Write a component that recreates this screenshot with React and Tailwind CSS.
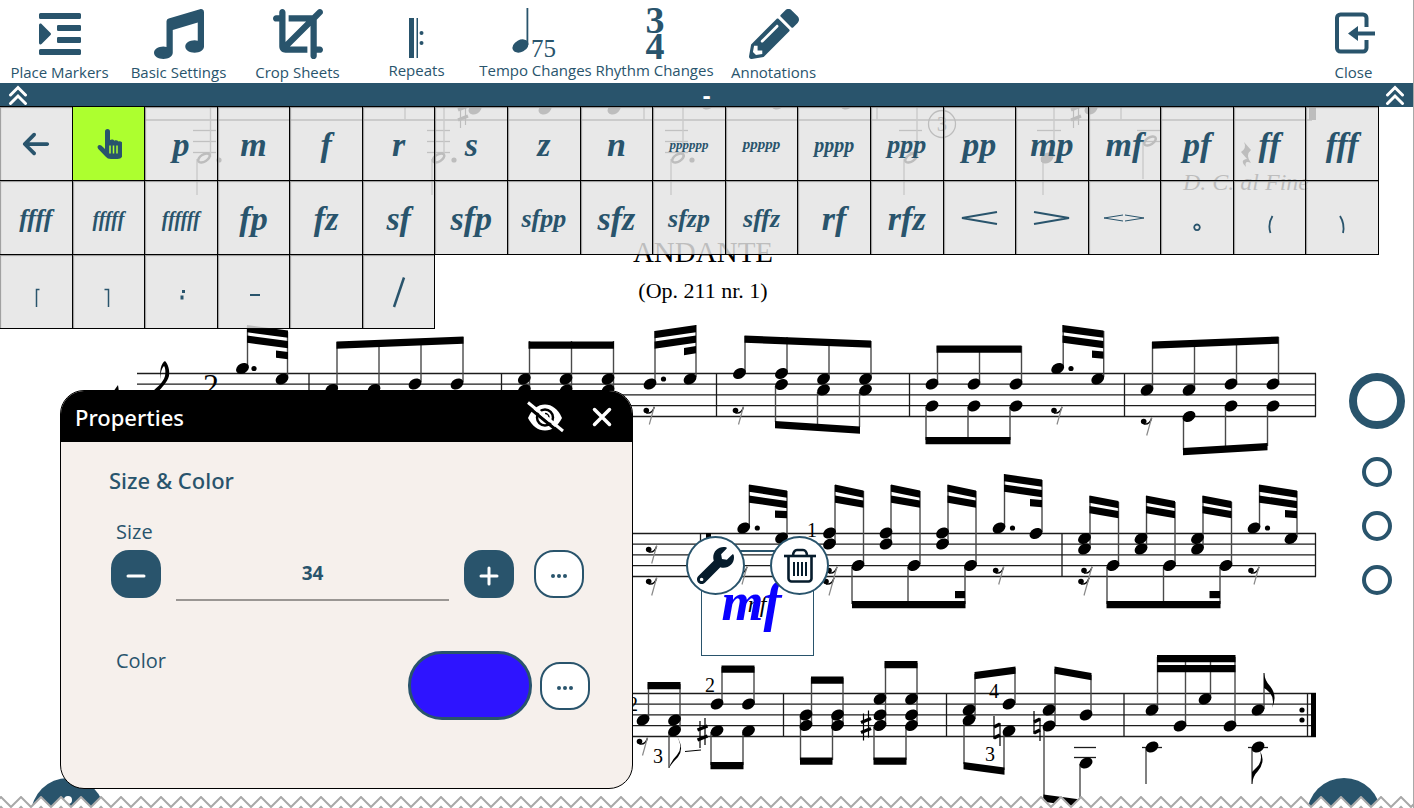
import { FaIndent, FaMusic, FaPencilAlt, FaWrench } from 'react-icons/fa';
import { FaArrowLeft, FaCrop } from 'react-icons/fa6';

/* ---------- Toolbar icons ---------- */

function RepeatIcon() {
  return (
    <svg width="50" height="50" viewBox="0 0 50 50" fill="currentColor" aria-hidden="true">
      <path d="M17 9h5v40h-5zM24.500 9H26v40h-1.500z" />
      <circle cx="29.500" cy="24" r="2" />
      <circle cx="29.500" cy="34" r="2" />
    </svg>
  );
}

function TempoIcon() {
  return (
    <svg width="50" height="50" viewBox="0 0 50 50" fill="currentColor" aria-hidden="true" className="overflow-visible">
      <ellipse cx="9.500" cy="37" rx="8.500" ry="6" transform="rotate(-28 9.500 37)" />
      <path d="M15.500 -1h1.800v37h-1.800z" />
      <text x="20" y="48" fontFamily="Liberation Serif, serif" fontSize="25">75</text>
    </svg>
  );
}

function RhythmIcon() {
  return (
    <svg width="50" height="50" viewBox="0 0 50 50" fill="currentColor" aria-hidden="true" className="overflow-visible">
      <g fontFamily="Liberation Serif, serif" fontWeight="700" fontSize="38" textAnchor="middle">
        <text x="25" y="24">3</text>
        <text x="25" y="50">4</text>
      </g>
    </svg>
  );
}

function ExitIcon() {
  return (
    <svg width="50" height="50" viewBox="0 0 50 50" fill="none" stroke="currentColor" strokeWidth="4" aria-hidden="true">
      <path d="M37.500 18V9A3.500 3.500 0 0 0 34 5.500H11.500A3.500 3.500 0 0 0 8 9v30a3.500 3.500 0 0 0 3.500 3.500H34a3.500 3.500 0 0 0 3.500-3.500v-8" />
      <path d="M27 24.500h19" />
      <path d="M19 24.500 29 17v15z" fill="currentColor" stroke="none" />
    </svg>
  );
}

function DoubleChevron() {
  return (
    <svg width="20" height="20" viewBox="0 0 20 20" fill="none" stroke="white" strokeWidth="3" strokeLinecap="round" aria-hidden="true">
      <path d="M2.500 10 10 2.500 17.500 10M2.500 18.500 10 11l7.500 7.500" />
    </svg>
  );
}

function HandIcon() {
  return (
    <svg width="28" height="30" viewBox="-3 0 28 30" aria-hidden="true">
      <path
        fill="currentColor"
        d="M8 2.500a2.500 2.500 0 0 1 5 0V11c1.500-1 3.500-.6 4.500.7 1.300-.8 3-.4 4 .8 2.500-.6 4.500.8 4.500 3.500V24c0 3.500-2 6-5.500 6H14c-2.500 0-4-.8-5.500-2.500L1.300 20C-.8 17.300 2 14.700 4.300 16.500L8 20z"
      />
      <path d="M13 16.500v8M16.500 16.500v8M20 16.500v8" stroke="#adff2f" strokeWidth="1.500" />
    </svg>
  );
}

function HideIcon() {
  return (
    <svg width="38" height="32" viewBox="0 0 38 32" fill="none" stroke="white" aria-hidden="true">
      <path d="M2 17C6 8 12 3.500 19 3.500S32 8 36 17c-4 8-10 12.500-17 12.500S6 25 2 17z" fill="white" stroke="none" />
      <circle cx="19" cy="16.500" r="8" strokeWidth="2.500" stroke="black" />
      <path d="M19 12.500a4 4 0 0 1 4 4" strokeWidth="1.500" stroke="black" />
      <path d="M1 5 35 33" stroke="black" strokeWidth="3" />
      <path d="M2 1.500 37 30" strokeWidth="3" />
    </svg>
  );
}

function TrashIcon() {
  return (
    <svg width="32" height="36" viewBox="0 0 32 36" fill="none" stroke="currentColor" strokeWidth="2.600" aria-hidden="true">
      <path d="M0 8h32" />
      <path d="M9 8c0-4 2-6 4-6h6c2 0 4 2 4 6" />
      <path d="M4.500 8v22.500a3 3 0 0 0 3 3h17a3 3 0 0 0 3-3V8" />
      <path d="M10 14v14M14 14v14M18 14v14M22 14v14" strokeWidth="2" />
    </svg>
  );
}

/* ---------- Toolbar ---------- */

const TOOLS = [
  { label: 'Place Markers', icon: <FaIndent size={48} /> },
  { label: 'Basic Settings', icon: <FaMusic size={50} /> },
  { label: 'Crop Sheets', icon: <FaCrop size={50} /> },
  { label: 'Repeats', icon: <RepeatIcon />, raised: true },
  { label: 'Tempo Changes', icon: <TempoIcon />, raised: true },
  { label: 'Rhythm Changes', icon: <RhythmIcon />, raised: true },
  { label: 'Annotations', icon: <FaPencilAlt size={50} /> },
];

function ToolButton({ label, icon, raised }) {
  return (
    <button type="button" className="flex w-[119px] shrink-0 flex-col items-center">
      <span className="flex h-[50px] items-center justify-center">{icon}</span>
      <span className={`text-[15px] leading-[22px] whitespace-nowrap ${raised ? '' : 'pt-0.5'}`}>{label}</span>
    </button>
  );
}

function Toolbar() {
  return (
    <header>
      <nav className="flex h-[83px] justify-between bg-white pt-[9px]">
        <div className="flex">
          {TOOLS.map((tool) => (
            <ToolButton key={tool.label} {...tool} />
          ))}
        </div>
        <ToolButton label="Close" icon={<ExitIcon />} />
      </nav>
      <div className="flex h-6 items-center justify-between bg-[#29546c] px-2">
        <button type="button" aria-label="Collapse left">
          <DoubleChevron />
        </button>
        <button type="button" className="text-2xl leading-6 font-bold text-white">-</button>
        <button type="button" aria-label="Collapse right">
          <DoubleChevron />
        </button>
      </div>
    </header>
  );
}

/* ---------- Symbol palette ---------- */

const SIZES = {
  xs: 'text-[13px]',
  sm: 'text-[15px]',
  md: 'text-[20px]',
  lg: 'text-[26px]',
  xl: 'text-[34px]',
};

const SYMBOLS = [
  ['p', 'xl'], ['m', 'xl'], ['f', 'xl'], ['r', 'xl'], ['s', 'xl'], ['z', 'xl'], ['n', 'xl'],
  ['pppppp', 'xs'], ['ppppp', 'sm'], ['pppp', 'md'], ['ppp', 'lg'], ['pp', 'xl'], ['mp', 'xl'],
  ['mf', 'xl'], ['pf', 'xl'], ['ff', 'xl'], ['fff', 'xl'],
  ['ffff', 'lg'], ['fffff', 'md'], ['ffffff', 'md'], ['fp', 'xl'], ['fz', 'xl'], ['sf', 'xl'],
  ['sfp', 'xl'], ['sfpp', 'lg'], ['sfz', 'xl'], ['sfzp', 'lg'], ['sffz', 'lg'], ['rf', 'xl'], ['rfz', 'xl'],
];

// Strokes inside a 44 x 44 box
const MARKS = [
  ['Crescendo', 'M40 16 5 22l35 6', 2],
  ['Decrescendo', 'M4 16l35 6-35 6', 2],
  ['Swell', 'M21 19 2 22l19 3M23 19l19 3-19 3', 1],
  ['Niente', 'M22 28.500a2.800 2.800 0 1 0 .01 0z', 1.800],
  ['Open parenthesis', 'M24.500 20q-5 8 -2 17', 1.800],
  ['Close parenthesis', 'M20 20q5 8 3 17', 1.800],
  ['Open bracket', 'M25.500 19.500h-3V37', 1.500],
  ['Close bracket', 'M18.500 19.500h4V37', 1.500],
  ['Colon', 'M24.500 20v3M23 25.500v4', 3],
  ['Dash', 'M18 25h10', 2],
  ['Blank', '', 1],
  ['Slash', 'M17 37 27 7.500', 2.500],
];

function Cell({ label, active, children }) {
  return (
    <button
      type="button"
      aria-label={label}
      className={`flex h-[74px] items-center justify-center border-r border-b border-black ${
        active ? 'bg-[#adff2f]' : 'bg-[#e3e3e3]/83 inset-shadow-[1px_1px_1px_#999999]'
      }`}
    >
      {children}
    </button>
  );
}

function Palette() {
  return (
    <div className="relative -mt-px pr-[34px]">
      <div className="grid grid-cols-19 border-t border-black">
        <Cell label="Back">
          <FaArrowLeft size={30} />
        </Cell>
        <Cell label="Select" active>
          <HandIcon />
        </Cell>
        {SYMBOLS.map(([text, size]) => (
          <Cell key={text} label={text}>
            <span className={`pt-0.5 font-['Liberation_Serif',serif] leading-none font-bold italic ${SIZES[size]}`}>{text}</span>
          </Cell>
        ))}
        {MARKS.map(([name, d, width]) => (
          <Cell key={name} label={name}>
            <svg width="44" height="44" viewBox="0 0 44 44" fill="none" stroke="currentColor" strokeWidth={width}>
              <path d={d} />
            </svg>
          </Cell>
        ))}
      </div>
    </div>
  );
}

/* ---------- Score ---------- */

const STAVES = [
  { x: 137, y: 373.5, bars: [309, 501.5, 716.5, 909.5, 1124.5, 1315.5] },
  { x: 137, y: 533.5, bars: [700.5, 1062, 1315.5] },
  { x: 137, y: 693.5, bars: [783.5, 946.5, 1124, 1307.5] },
];

const HEADS = [
  // first staff
  [242.5, 368.5], [282, 379], [331.7, 389.5], [374, 389.5], [415, 384], [457, 384],
  [524.3, 379], [566, 379], [608, 379], [524.3, 390], [566, 390], [608, 390], [650, 384], [690, 379],
  [739.5, 373.5], [781.5, 373.5], [823.5, 379], [865.5, 379], [781.5, 384.5], [823.5, 390], [865.5, 390],
  [932, 384], [974, 384], [1016, 384], [932, 406], [974, 406], [1016, 406], [1057.7, 368.5], [1097.7, 379],
  [1147, 390], [1189, 390], [1231, 384], [1273, 384], [1189, 416.5], [1231, 406], [1273, 406],
  // second staff
  [743.7, 528], [781.5, 538], [829.5, 533], [829.5, 544], [858, 565.5], [886, 533], [886, 544], [914, 565.5],
  [942.5, 533], [942.5, 544], [970.5, 565.5], [999, 528], [1036, 533.5],
  [1084.5, 538.5], [1084.5, 549], [1113, 565.5], [1141, 538.5], [1141, 549], [1169.5, 565.5],
  [1197.5, 538.5], [1197.5, 549], [1226, 565.5], [1254, 528], [1291, 538.5],
  // third staff
  [643, 720], [674.5, 720], [674.5, 731], [717, 704], [748.5, 704], [717, 731], [748.5, 731],
  [806, 715], [837.5, 715], [806, 725.5], [837.5, 725.5],
  [880, 699], [911.5, 699], [880, 715], [911.5, 715], [880, 725.5], [911.5, 725.5],
  [969, 710], [969, 720], [1009, 704], [1009, 731], [1049, 710], [1049, 726], [1086, 715], [1086, 763],
  [1152, 710], [1180, 726], [1205, 699], [1230, 726], [1258, 710], [1152, 747], [1258, 747],
  // staff under the palette
  [475, 109], [545, 109], [614, 109], [708, 104], [778, 104], [847, 104], [1047, 158], [1091, 109],
];

const HOLLOW = [[204, 158], [438.5, 158], [678, 158], [911, 158], [1150, 141]];

const DOTS = [
  [254, 368.5], [663.5, 379], [1071, 368.5], [757.3, 528], [1012.5, 528], [1267.5, 528],
  [219, 160], [454, 160], [692, 160], [1302, 710], [1302, 720],
];

// x, top, bottom
const STEMS = [
  [247.5, 326, 367], [287.5, 332, 377], [337, 342, 388], [379, 341, 388], [421, 339, 382], [463, 337, 382],
  [529.5, 341, 390], [571.5, 341, 390], [613.5, 341, 390], [655, 331, 382], [696, 325, 377],
  [745, 336, 372], [787, 337, 372], [829, 339, 377], [871, 341, 377], [775.5, 386, 422], [817.5, 392, 424], [859.5, 392, 427],
  [937.5, 346, 382], [979.5, 346, 382], [1021.5, 346, 382], [926, 407, 440], [968, 407, 440], [1010, 407, 440],
  [1063.2, 325, 367], [1103.7, 331, 377], [1152.5, 342, 388], [1194.5, 341, 388], [1236.5, 339, 382], [1278.5, 337, 382],
  [1183.5, 418, 450], [1225.5, 407, 448], [1267.5, 407, 446],
  [749.3, 485, 527], [787, 491, 537], [835, 485, 543], [863.5, 491, 564], [891, 485, 543], [920, 491, 564],
  [948, 485, 543], [976, 491, 564], [1004.5, 474, 527], [1042, 480, 532], [852, 567, 604], [908, 567, 604], [965, 567, 604],
  [1090, 496, 548], [1118.5, 502, 564], [1146.5, 496, 548], [1175, 502, 564], [1203, 496, 548], [1231.5, 502, 564],
  [1259.5, 485, 527], [1297, 491, 537], [1107, 567, 604], [1163.5, 567, 604], [1220, 567, 604],
  [648.5, 684, 719], [680, 684, 730], [669, 732, 768], [722, 667, 703], [754, 667, 703], [711, 732, 765], [743, 732, 765],
  [811.5, 678, 724], [843, 678, 724], [800.5, 716, 760], [832.5, 716, 760], [885.5, 663, 724], [917, 663, 724],
  [874, 727, 760], [906, 727, 760], [975, 674, 719], [1015, 668, 703], [964, 721, 764], [1004, 732, 770],
  [1055, 669, 725], [1091, 675, 714], [1044, 727, 798], [1080, 764, 802], [1157.5, 657, 709], [1185.5, 657, 725],
  [1210.5, 657, 698], [1235, 657, 725], [1264, 673, 709], [1146, 748, 784], [1252, 748, 784],
  [197, 159, 195], [210.5, 107, 157], [405, 107, 120], [432, 159, 195], [444, 107, 157], [644, 107, 120],
  [671, 159, 195], [683, 107, 157], [877, 107, 120], [904, 159, 195], [917, 107, 157], [1043, 159, 195],
  [1054, 107, 157], [1121, 107, 120], [1143, 142, 179],
];

// x1, y1, x2, y2 of the upper edge
const BEAM = 7.2;
const BEAMS = [
  [247, 325, 288, 330.5], [247, 335.5, 288, 341], [276, 350.5, 288, 352], [336.5, 341.5, 463.5, 336.5],
  [528.5, 341.5, 614, 341.5], [654.5, 331, 696, 325], [654.5, 341.5, 696, 335.5], [684, 348, 696, 346],
  [744.5, 335.5, 871, 340.5], [775, 421, 860, 426.5], [936.5, 345.5, 1021.5, 345.5], [925.5, 437, 1010.5, 437],
  [1062.5, 325, 1103.5, 330.5], [1062.5, 335.5, 1103.5, 341], [1092, 350.5, 1103.5, 351.5],
  [1152, 341.5, 1278.5, 336.5], [1183, 448, 1267.5, 443],
  [749, 484.5, 787, 490.5], [749, 495.5, 787, 501], [775, 510.5, 787, 511],
  [835, 484.5, 863.5, 490.5], [835, 495.5, 863.5, 500.5], [891, 484.5, 920, 490.5], [891, 495.5, 920, 500.5],
  [947.5, 484.5, 976, 490.5], [947.5, 495.5, 976, 500.5], [1004, 474, 1042, 479.5], [1004, 484.5, 1042, 490],
  [1030, 499, 1042, 500], [852, 601, 965.5, 601], [955, 591, 965, 591],
  [1089.5, 495.5, 1118.5, 501], [1089.5, 506, 1118.5, 511], [1146, 495.5, 1175, 501], [1146, 506, 1175, 511],
  [1202.5, 495.5, 1231.5, 501], [1202.5, 506, 1231.5, 511], [1259, 484.5, 1297, 490.5], [1259, 495.5, 1297, 501],
  [1285, 510, 1297, 511], [1106.5, 601, 1220.5, 601], [1209.5, 591, 1220, 591],
  [647.5, 682, 680.5, 682], [721.5, 665.5, 754.5, 665.5], [710.5, 762, 743.5, 762], [811, 676.5, 843.5, 676.5],
  [800, 757.5, 832.5, 757.5], [884.5, 661, 917.5, 661], [873.5, 757.5, 906.5, 757.5],
  [974.5, 672, 1015.5, 666.5], [963.5, 762, 1004.5, 767.5], [1054.5, 666.5, 1091.5, 673], [1043.5, 794.5, 1080.5, 799.5],
  [1157, 655, 1235.5, 655], [1157, 665, 1235.5, 665],
];

const RESTS = [
  [646.3, 410.5], [735.5, 410.5], [1054, 410.5], [1143.7, 421.5], [648.7, 549.5], [648.7, 581.5],
  [739, 570.5], [829, 570.5], [826, 581.5], [995.7, 570.5], [1084, 570.5], [1081, 581.5], [1251, 570.5], [639.5, 741.5],
];

const SHARPS = [[463, 113], [1076, 113], [702.5, 733], [866, 725.5]];
const NATURALS = [[997, 731], [1037, 726]];

// x, y, width
const LEDGERS = [
  ...[193, 427, 665, 899].flatMap((x) => [[x, 130.5, 23], [x, 141.5, 23], [x, 152.5, 23]]),
  [1037, 130.5, 24], [1137, 130.5, 23], [1137, 141.5, 23],
  [1074, 747.5, 22], [1074, 757.5, 22], [1142, 747.5, 20], [1248, 747.5, 20],
];

const FINGERINGS = [
  ['2', 710, 692], ['3', 658, 763], ['2', 633, 711], ['4', 994, 698], ['3', 990, 761], ['1', 812, 537],
];

function Score() {
  return (
    <svg
      viewBox="0 107 1413 701"
      preserveAspectRatio="xMidYMin slice"
      className="absolute inset-0 h-full w-full"
      role="img"
      aria-label="Andante, Op. 211 nr. 1"
    >
      <g stroke="#1c1c1c" strokeWidth="1.300">
        <path d="M145 120H1312" />
        {STAVES.map(({ x, y, bars }) => (
          <g key={y}>
            {[0, 10.7, 21.4, 32.1, 43].map((dy) => (
              <path key={dy} d={`M${x} ${y + dy}H1316`} />
            ))}
            {bars.map((bx) => (
              <path key={bx} d={`M${bx} ${y}v43`} />
            ))}
          </g>
        ))}
        {LEDGERS.map(([x, y, w]) => (
          <path key={`${x}-${y}`} d={`M${x} ${y}h${w}`} />
        ))}
      </g>

      <g stroke="#4a4a4a" strokeWidth="1.400">
        {STEMS.map(([x, y1, y2]) => (
          <path key={`${x}-${y1}`} d={`M${x} ${y1}V${y2}`} />
        ))}
      </g>

      {BEAMS.map(([x1, y1, x2, y2]) => (
        <path key={`${x1}-${y1}`} d={`M${x1} ${y1}L${x2} ${y2}v${BEAM}L${x1} ${y1 + BEAM}z`} />
      ))}
      {HEADS.map(([x, y]) => (
        <ellipse key={`${x}-${y}`} cx={x} cy={y} rx="6.800" ry="5" transform={`rotate(-28 ${x} ${y})`} />
      ))}
      {HOLLOW.map(([x, y]) => (
        <g key={x} fill="none" stroke="black" transform={`rotate(-32 ${x} ${y})`}>
          <ellipse cx={x} cy={y} rx="6.500" ry="3.500" strokeWidth="2.500" />
        </g>
      ))}
      {DOTS.map(([x, y]) => (
        <circle key={`${x}-${y}`} cx={x} cy={y} r="2.600" />
      ))}

      {RESTS.map(([x, y]) => (
        <g key={`${x}-${y}`} fill="none">
          <circle cx={x} cy={y} r="2.800" fill="black" />
          <path d={`M${x} ${y + 2.5}q6 1 8-6`} stroke="black" strokeWidth="1.300" />
          <path d={`M${x + 8} ${y - 4}l-5 18`} stroke="#888888" strokeWidth="1.200" />
        </g>
      ))}

      {SHARPS.map(([x, y]) => (
        <g key={x} stroke="black">
          <path d={`M${x - 2.5} ${y - 12}v27M${x + 2.5} ${y - 15}v27`} strokeWidth="1.200" />
          <path d={`M${x - 5} ${y - 3}l10-4M${x - 5} ${y + 7}l10-4`} strokeWidth="3.500" />
        </g>
      ))}
      {NATURALS.map(([x, y]) => (
        <g key={x} stroke="black" fill="none">
          <path d={`M${x - 3} ${y - 15}v23M${x + 3} ${y - 8}v23`} strokeWidth="1.200" />
          <path d={`M${x - 3} ${y - 4}l6-3M${x - 3} ${y + 7}l6-3`} strokeWidth="3.500" />
        </g>
      ))}

      {/* Flags */}
      <path d="M669 768q2-7 8-13 7-8-1-20 9 13 2 22-6 6-9 11z" />
      <path d="M1264 673q1 8 6 13 8 10 2 22 3-10-3-16-3-3-5-4z" />
      <path d="M1252 784q1-8 6-13 8-10 2-20 3 10-3 16-3 3-5 5z" />

      {/* Clef */}
      <path d="M161 380c-2-8 0-17 4-19 3 3 5 9 4 15-2 7-7 11-11 16h-6c6-6 11-9 13-16 1-5 0-9-1-10-3 3-4 9-3 14z" />
      <path d="M113 392l5-7 1 7z" />

      {/* Closing bar lines and quarter rest */}
      <path d="M1311 693h5v44h-5zM1309 107h7v13h-7zM706 533h5v10h-5z" />
      <path d="M1244 142l7 8q-6 5 0 13-7-3-5 4-7-7 1-8l-6-7q6-4 3-10z" />
      <path d="M685 751.500l16-1.500" stroke="black" />
      <circle cx="942" cy="124" r="13.500" fill="none" stroke="black" strokeWidth="1.300" />

      <g fontFamily="Liberation Serif, serif" textAnchor="middle">
        <text x="211" y="396" fontSize="32">2</text>
        <text x="942" y="131" fontSize="20" fontWeight="700">3</text>
        {FINGERINGS.map(([n, x, y]) => (
          <text key={`${x}-${y}`} x={x} y={y} fontSize="20">{n}</text>
        ))}
        <text x="703" y="262" fontSize="29">ANDANTE</text>
        <text x="703" y="298" fontSize="22">(Op. 211 nr. 1)</text>
        <text x="1246" y="190" fontSize="24" fontStyle="italic">D. C. al Fine</text>
        <text x="757" y="612" fontSize="24" fontStyle="italic">nf</text>
      </g>
    </svg>
  );
}

/* ---------- Floating controls ---------- */

function PageDots() {
  return (
    <div className="absolute top-[266px] right-2 flex flex-col items-center">
      <button type="button" aria-label="Current page" className="mb-7 size-14 rounded-full border-8 border-[#29546c]" />
      <div className="flex flex-col gap-6">
        {[2, 3, 4].map((n) => (
          <button key={n} type="button" aria-label={`Page ${n}`} className="size-[30px] rounded-full border-4 border-[#29546c]" />
        ))}
      </div>
    </div>
  );
}

function SelectedSymbol() {
  return (
    <div className="absolute top-[443px] left-[701px] h-[106px] w-[113px] border border-t-2 border-[#29546c]">
      <p className="pt-6 pr-3 text-center font-['Liberation_Serif',serif] text-[54px] leading-[52px] font-bold text-[#0a00ff] italic">mf</p>
      <div className="absolute -top-4 -left-4 flex gap-[25px] text-[#061c2c]">
        <button type="button" aria-label="Edit" className="flex size-[59px] items-center justify-center rounded-full border-2 border-[#29546c] bg-white">
          <FaWrench size={37} />
        </button>
        <button type="button" aria-label="Delete" className="flex size-[59px] items-center justify-center rounded-full border-2 border-[#29546c] bg-white">
          <TrashIcon />
        </button>
      </div>
    </div>
  );
}

function MoreButton({ label }) {
  return (
    <button
      type="button"
      aria-label={label}
      className="flex h-12 w-[50px] items-center justify-center gap-0.5 rounded-[20px] border-2 border-[#29546c] bg-white pt-1"
    >
      <span className="size-[4px] rounded-full bg-[#29546c]" />
      <span className="size-[4px] rounded-full bg-[#29546c]" />
      <span className="size-[4px] rounded-full bg-[#29546c]" />
    </button>
  );
}

function StepButton({ label, d }) {
  return (
    <button type="button" aria-label={label} className="flex h-12 w-[50px] items-center justify-center rounded-[18px] bg-[#29546c] pt-1">
      <svg width="20" height="20" viewBox="0 0 20 20" stroke="white" strokeWidth="3" strokeLinecap="round">
        <path d={d} />
      </svg>
    </button>
  );
}

function PropertiesPanel() {
  return (
    <section className="absolute top-[283px] left-[60px] h-[399px] w-[573px] overflow-hidden rounded-3xl border border-black bg-[#f6f0ec]">
      <div className="flex h-[51px] items-center justify-between bg-black pr-5 pl-[14px] text-white">
        <h2 className="font-['Noto_Sans',sans-serif] text-[22px] leading-8 font-medium">Properties</h2>
        <div className="flex items-center gap-7">
          <button type="button" aria-label="Hide panel">
            <HideIcon />
          </button>
          <button type="button" aria-label="Close panel">
            <svg width="20" height="20" viewBox="0 0 20 20" stroke="white" strokeWidth="3.500" strokeLinecap="round">
              <path d="M2.500 2.500l15 15M17.500 2.500l-15 15" />
            </svg>
          </button>
        </div>
      </div>

      <div className="pr-[42px] pl-12">
        <h3 className="pt-[22px] font-['Noto_Sans',sans-serif] text-[22px] leading-8 font-medium">Size &amp; Color</h3>
        <label htmlFor="symbol-size" className="mt-5 block pb-0.5 pl-[7px] text-[20px] leading-8">Size</label>
        <div className="flex items-start pl-0.5">
          <StepButton label="Decrease size" d="M2 10h16" />
          <input
            id="symbol-size"
            type="text"
            defaultValue="34"
            className="mx-[15px] h-[51px] w-[273px] border-b-2 border-[#9a9693] bg-transparent pb-1 text-center text-[19px] font-bold outline-none"
          />
          <StepButton label="Increase size" d="M2 10h16M10 2v16" />
          <div className="ml-5">
            <MoreButton label="More sizes" />
          </div>
        </div>
        <div className="mt-[50px] flex items-start justify-between pl-[7px]">
          <label htmlFor="symbol-color" className="-mt-1.5 text-[20px] leading-8">Color</label>
          <div className="flex items-center gap-2">
            <button id="symbol-color" type="button" aria-label="Pick color" className="h-[69px] w-[124px] rounded-[34px] border-[3px] border-[#29546c] bg-[#2e14ff]" />
            <MoreButton label="More colors" />
          </div>
        </div>
      </div>
    </section>
  );
}

function TornEdge() {
  return (
    <div className="absolute inset-x-0 bottom-0 h-[30px] overflow-hidden">
      <div className="flex justify-between pr-8 pl-[31px]">
        <button type="button" aria-label="Help" className="flex size-[74px] justify-center rounded-full bg-[#29546c] pt-[18px]">
          <span className="size-2 rounded-full bg-white" />
        </button>
        <button type="button" aria-label="Play" className="size-[74px] rounded-full bg-[#29546c]" />
      </div>
      <svg className="absolute bottom-0 left-0 h-3 w-full" aria-hidden="true">
        <defs>
          <pattern id="zigzag" x="11" width="20" height="12" patternUnits="userSpaceOnUse">
            <path d="M0 11 10 1l10 10v1H0z" fill="white" />
            <path d="M-1 12 10 1l11 11M7 14l3-3 3 3" fill="none" stroke="#a8a8a8" strokeWidth="2" />
          </pattern>
        </defs>
        <rect width="100%" height="12" fill="url(#zigzag)" />
      </svg>
    </div>
  );
}

export default function App() {
  return (
    <div className="flex min-h-screen flex-col border-r border-[#a8a8a8] bg-white font-['Open_Sans','Noto_Sans',sans-serif] text-[#29546c]">
      <Toolbar />
      <main className="relative min-h-[701px] flex-1">
        <Score />
        <Palette />
        <PageDots />
        <SelectedSymbol />
        <TornEdge />
        <PropertiesPanel />
      </main>
    </div>
  );
}
